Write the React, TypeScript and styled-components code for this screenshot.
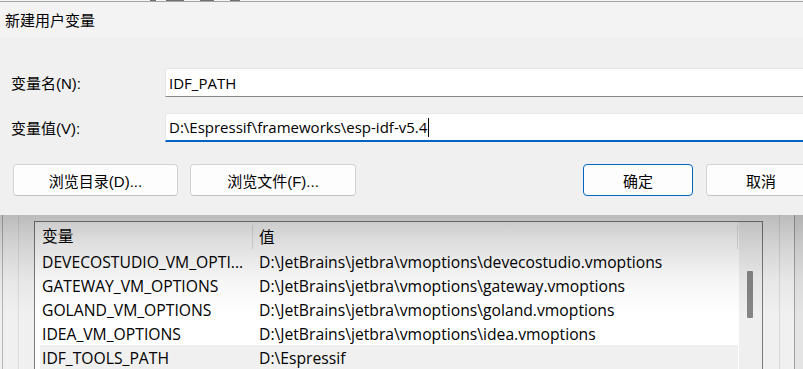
import styled, { createGlobalStyle } from 'styled-components';

const GlobalStyle = createGlobalStyle`
  html, body {
    margin: 0;
    padding: 0;
    background: #f0f0f0;
    overflow: hidden;
  }
  * {
    box-sizing: border-box;
  }
`;

const FONT = `"Liberation Sans", "Noto Sans CJK SC", sans-serif`;
const TEXT_FONT = `"Open Sans", "Noto Sans CJK SC", sans-serif`;

const Page = styled.div`
  width: 803px;
  height: 369px;
  overflow: hidden;
  display: flex;
  flex-direction: column;
  font-family: ${FONT};
  color: #000;
  background: #f0f0f0;
`;

// edge of the window behind the dialog
const BehindStrip = styled.div`
  height: 2px;
  background: linear-gradient(
    to right,
    #f7f7f7 150px,
    #3a3a3a 150px,
    #3a3a3a 156px,
    #f7f7f7 156px,
    #f7f7f7 166px,
    #3a3a3a 166px,
    #3a3a3a 184px,
    #f7f7f7 184px,
    #f7f7f7 200px,
    #3a3a3a 200px,
    #3a3a3a 214px,
    #f7f7f7 214px,
    #f7f7f7 230px,
    #3a3a3a 230px,
    #3a3a3a 240px,
    #f7f7f7 240px
  );
  opacity: 0.7;
`;

const Dialog = styled.div`
  width: 830px;
  height: 214px;
  flex-shrink: 0;
  border-top: 1px solid #a4a4a4;
  background: #f0f0f0;
  display: flex;
  flex-direction: column;
`;

const TitleBar = styled.div`
  height: 35px;
  display: flex;
  align-items: center;
  padding-left: 5px;
  background: #f3f3f3;
  font-size: 15px;
`;

const Body = styled.div`
  display: flex;
  flex-direction: column;
  padding: 31px 14px 0 11px;
`;

const FieldRow = styled.div<{ $gap?: number }>`
  display: flex;
  align-items: center;
  height: 29px;
  margin-top: ${(p) => p.$gap ?? 0}px;
`;

const Label = styled.div`
  width: 154px;
  flex-shrink: 0;
  font-size: 15px;
`;

const Input = styled.div<{ $focused?: boolean }>`
  flex: 1;
  height: 29px;
  display: flex;
  align-items: center;
  padding-left: 3px;
  background: #fff;
  border: 1px solid #e6e6e6;
  border-bottom: ${(p) => (p.$focused ? '2px solid #0067c0' : '1px solid #878787')};
  border-radius: 3px 3px 0 0;
  font-family: ${TEXT_FONT};
  font-size: 15px;
  white-space: nowrap;
`;

const Caret = styled.span`
  display: inline-block;
  width: 1px;
  height: 19px;
  margin-left: 1px;
  background: #000;
`;

const ButtonRow = styled.div`
  display: flex;
  gap: 12px;
  margin-top: 22px;
  padding-left: 2px;
`;

const ActionGroup = styled.div`
  display: flex;
  gap: 13px;
  margin-left: auto;
`;

const Button = styled.div<{ $w: number; $primary?: boolean }>`
  width: ${(p) => p.$w}px;
  height: 32px;
  display: flex;
  align-items: center;
  justify-content: center;
  background: #fdfdfd;
  border: 1px solid ${(p) => (p.$primary ? '#0067c0' : '#d3d3d3')};
  border-bottom-color: ${(p) => (p.$primary ? '#0067c0' : '#c2c2c2')};
  border-radius: 4px;
  font-size: 15px;
`;

const BackWindow = styled.div`
  position: relative;
  flex: 1;
  display: flex;
  padding-top: 6px;
  background: #f0f0f0;
`;

const LeftEdge = styled.div`
  width: 34px;
  flex-shrink: 0;
  margin-top: -6px;
  background: linear-gradient(
    to right,
    transparent 2px,
    #b4b4b4 2px,
    #b4b4b4 3px,
    transparent 3px,
    transparent 18px,
    #dcdcdc 18px,
    #dcdcdc 19px,
    transparent 19px
  );
`;

const RightEdge = styled.div`
  flex: 1;
  margin-top: -6px;
  background: linear-gradient(
    to right,
    transparent 16px,
    #d8d8d8 16px,
    #d8d8d8 17px,
    transparent 17px,
    transparent 31px,
    #a2a2a2 31px,
    #a2a2a2 32px,
    #e4e4e4 32px
  );
`;

const ListBox = styled.div`
  width: 729px;
  flex-shrink: 0;
  display: flex;
  border: 1px solid #7a7a7a;
  border-bottom: none;
  background: #fff;
`;

const Rows = styled.div`
  width: 705px;
  padding-left: 5px;
  border-right: 1px solid #fff;
`;

const Grid = styled.div<{ $header?: boolean; $selected?: boolean }>`
  display: grid;
  grid-template-columns: 212px 1fr;
  height: ${(p) => (p.$header ? 27 : 24)}px;
  padding-top: ${(p) => (p.$header ? 0 : 2)}px;
  align-items: center;
  background: ${(p) => (p.$selected ? '#f0f0f0' : 'transparent')};
  font-family: ${TEXT_FONT};
  font-size: 15.7px;
  white-space: nowrap;
`;

const Cell = styled.div<{ $value?: boolean; $header?: boolean }>`
  overflow: hidden;
  padding-left: ${(p) => (p.$value ? 7 : 2)}px;
  ${(p) =>
    p.$header &&
    p.$value &&
    `
    height: 24px;
    display: flex;
    align-items: center;
    border-left: 1px solid #e2e2e2;
    border-right: 1px solid #e2e2e2;
    margin-top: 2px;
    padding-left: 6px;
  `}
`;

const ScrollTrack = styled.div`
  width: 23px;
  background: #efefef;
  padding: 49px 0 0 8px;
`;

const Thumb = styled.div`
  width: 6px;
  height: 47px;
  border-radius: 1px;
  background: #858585;
`;

const Shadow = styled.div`
  position: absolute;
  left: 0;
  right: 0;
  top: 0;
  height: 100px;
  pointer-events: none;
  background: linear-gradient(
    to bottom,
    rgba(0, 0, 0, 0.22) 0%,
    rgba(0, 0, 0, 0.12) 30%,
    rgba(0, 0, 0, 0.04) 65%,
    rgba(0, 0, 0, 0) 100%
  );
`;

const VARS = [
  { name: 'DEVECOSTUDIO_VM_OPTI...', value: 'D:\\JetBrains\\jetbra\\vmoptions\\devecostudio.vmoptions' },
  { name: 'GATEWAY_VM_OPTIONS', value: 'D:\\JetBrains\\jetbra\\vmoptions\\gateway.vmoptions' },
  { name: 'GOLAND_VM_OPTIONS', value: 'D:\\JetBrains\\jetbra\\vmoptions\\goland.vmoptions' },
  { name: 'IDEA_VM_OPTIONS', value: 'D:\\JetBrains\\jetbra\\vmoptions\\idea.vmoptions' },
  { name: 'IDF_TOOLS_PATH', value: 'D:\\Espressif', selected: true },
];

export default function App() {
  return (
    <Page>
      <GlobalStyle />
      <BehindStrip />
      <Dialog>
        <TitleBar>新建用户变量</TitleBar>
        <Body>
          <FieldRow>
            <Label>变量名(N):</Label>
            <Input>IDF_PATH</Input>
          </FieldRow>
          <FieldRow $gap={16}>
            <Label>变量值(V):</Label>
            <Input $focused>
              D:\Espressif\frameworks\esp-idf-v5.4
              <Caret />
            </Input>
          </FieldRow>
          <ButtonRow>
            <Button $w={165}>浏览目录(D)...</Button>
            <Button $w={166}>浏览文件(F)...</Button>
            <ActionGroup>
              <Button $w={110} $primary>
                确定
              </Button>
              <Button $w={110}>取消</Button>
            </ActionGroup>
          </ButtonRow>
        </Body>
      </Dialog>
      <BackWindow>
        <LeftEdge />
        <ListBox>
          <Rows>
            <Grid $header>
              <Cell $header>变量</Cell>
              <Cell $header $value>
                值
              </Cell>
            </Grid>
            {VARS.map((v) => (
              <Grid key={v.name} $selected={v.selected}>
                <Cell>{v.name}</Cell>
                <Cell $value>{v.value}</Cell>
              </Grid>
            ))}
          </Rows>
          <ScrollTrack>
            <Thumb />
          </ScrollTrack>
        </ListBox>
        <RightEdge />
        <Shadow />
      </BackWindow>
    </Page>
  );
}
